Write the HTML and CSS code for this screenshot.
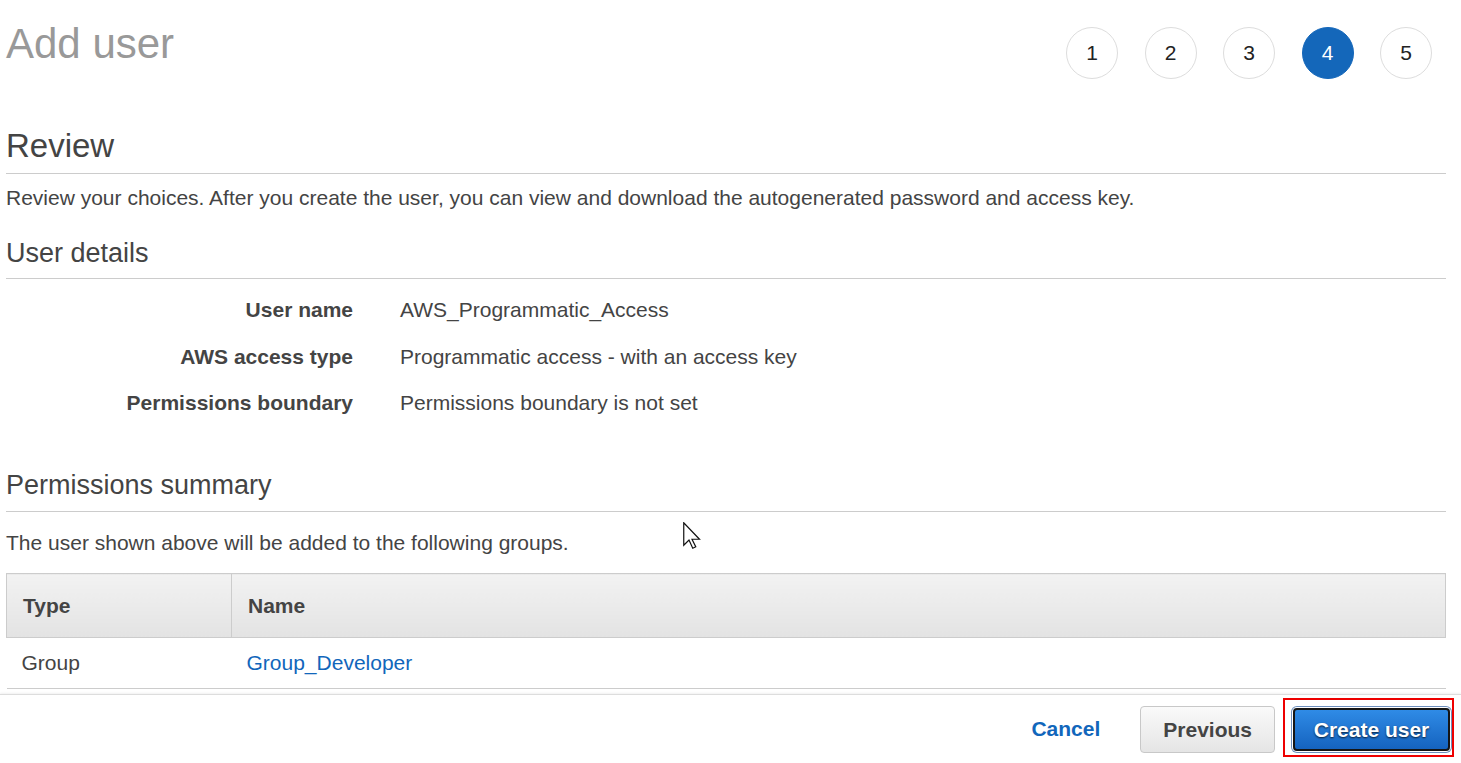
FILE: index.html
```html
<!DOCTYPE html>
<html lang="en">
<head>
<meta charset="utf-8">
<title>Add user</title>
<link rel="stylesheet" href="styles.css">
</head>
<body>
<div class="main">
  <header class="top">
    <h1 class="title">Add user</h1>
    <ol class="steps">
      <li class="step">1</li>
      <li class="step">2</li>
      <li class="step">3</li>
      <li class="step active">4</li>
      <li class="step">5</li>
    </ol>
  </header>

  <h2 class="h-review">Review</h2>
  <p class="intro">Review your choices. After you create the user, you can view and download the autogenerated password and access key.</p>

  <h3 class="h-section">User details</h3>
  <dl class="details">
    <dt>User name</dt><dd>AWS_Programmatic_Access</dd>
    <dt>AWS access type</dt><dd>Programmatic access - with an access key</dd>
    <dt>Permissions boundary</dt><dd>Permissions boundary is not set</dd>
  </dl>

  <h3 class="h-section h-perm">Permissions summary</h3>
  <p class="intro intro-perm">The user shown above will be added to the following groups.</p>

  <table class="groups">
    <thead>
      <tr><th class="col-type">Type</th><th>Name</th></tr>
    </thead>
    <tbody>
      <tr><td>Group</td><td><a class="link" href="#">Group_Developer</a></td></tr>
    </tbody>
  </table>
</div>

<footer class="footer">
  <a class="btn-cancel" href="#">Cancel</a>
  <button class="btn-prev" type="button">Previous</button>
  <span class="highlight"><button class="btn-create" type="button">Create user</button></span>
</footer>

<svg class="cursor" width="20" height="28" viewBox="0 0 20 28" aria-hidden="true">
  <path d="M0.75 0.75 L0.75 23.25 L6 18 L9.75 26.25 L12.75 24.75 L9 17.25 L16.5 17.25 Z" fill="#fff" stroke="#111" stroke-width="1.2" stroke-linejoin="miter"/>
</svg>
</body>
</html>
```

FILE: styles.css
```css
* { box-sizing: border-box; }

html, body {
  margin: 0;
  padding: 0;
  background: #fff;
}

body {
  font-family: "Liberation Sans", Arial, sans-serif;
  color: #444;
  font-size: 21px;
  line-height: 30px;
  width: 1461px;
  height: 763px;
  overflow: hidden;
  position: relative;
}

.main {
  padding: 0 15px 0 6px;
}

.top {
  display: flex;
  justify-content: space-between;
  align-items: flex-start;
}

.title {
  margin: 20px 0 0 0;
  font-size: 42px;
  line-height: 48px;
  font-weight: normal;
  color: #999;
}

.steps {
  list-style: none;
  margin: 27px 14px 0 0;
  padding: 0;
  display: flex;
  gap: 26.5px;
}

.step {
  width: 52px;
  height: 52px;
  border: 1px solid #ddd;
  border-radius: 50%;
  display: flex;
  align-items: center;
  justify-content: center;
  font-size: 21px;
  color: #222;
}

.step.active {
  background: #1467ba;
  border-color: #1467ba;
  color: #fff;
}

.h-review {
  margin: 47px 0 0 0;
  font-size: 33px;
  line-height: 40px;
  font-weight: normal;
  color: #444;
  padding-bottom: 7px;
  border-bottom: 1px solid #ccc;
}

.intro {
  margin: 9px 0 0 0;
}

.h-section {
  margin: 24px 0 0 0;
  font-size: 27px;
  line-height: 32px;
  font-weight: normal;
  color: #444;
  padding-bottom: 9px;
  border-bottom: 1px solid #ccc;
}

.details {
  margin: 16px 0 0 0;
  display: grid;
  grid-template-columns: 347px 1fr;
  column-gap: 47px;
  row-gap: 16.67px;
}

.details dt {
  text-align: right;
  font-weight: bold;
}

.details dd {
  margin: 0;
}

.h-perm {
  margin-top: 51px;
  padding-bottom: 10px;
}

.intro-perm {
  margin-top: 16px;
}

.groups {
  margin-top: 15px;
  width: 100%;
  border-collapse: collapse;
}

.groups th {
  text-align: left;
  font-weight: bold;
  height: 64px;
  padding: 0 16px;
  background: linear-gradient(#f2f2f2, #e3e3e3);
  border: 1px solid #ccc;
}

.groups th.col-type {
  width: 225px;
}

.groups td {
  padding: 10px 15px;
  border-bottom: 1px solid #ccc;
}

.link {
  color: #1166bb;
  text-decoration: none;
}

.footer {
  margin-top: 5px;
  border-top: 1px solid #ddd;
  box-shadow: 0 -1px 2px rgba(0, 0, 0, 0.06);
  height: 70px;
  padding: 11px 11px 0 0;
  display: flex;
  justify-content: flex-end;
  align-items: flex-start;
}

.btn-cancel {
  font-weight: bold;
  color: #1166bb;
  text-decoration: none;
  margin-top: 8px;
  margin-right: 40px;
}

.btn-prev {
  font-family: inherit;
  font-size: 21px;
  font-weight: bold;
  color: #444;
  height: 47px;
  padding: 0 22px;
  border: 1px solid #c8c8c8;
  border-radius: 4px;
  background: linear-gradient(#fafafa, #e5e5e5);
}

.highlight {
  position: relative;
  margin-left: 18px;
  margin-top: 2px;
  display: flex;
}

.highlight::after {
  content: "";
  position: absolute;
  left: -10px;
  right: -4px;
  top: -10px;
  bottom: -6px;
  border: 2px solid #e00;
  pointer-events: none;
}

.btn-create {
  font-family: inherit;
  font-size: 21px;
  font-weight: bold;
  color: #fff;
  height: 43px;
  width: 157px;
  padding: 0;
  border: 2px solid #151515;
  border-radius: 4px;
  background: linear-gradient(#2f8be6, #1563bf);
  box-shadow: 0 0 0 1px #fff, 0 0 0 2px #6d8fbd;
  text-shadow: 0 1px 2px rgba(0, 0, 0, 0.75);
}

.cursor {
  position: absolute;
  left: 683px;
  top: 522px;
}
```
